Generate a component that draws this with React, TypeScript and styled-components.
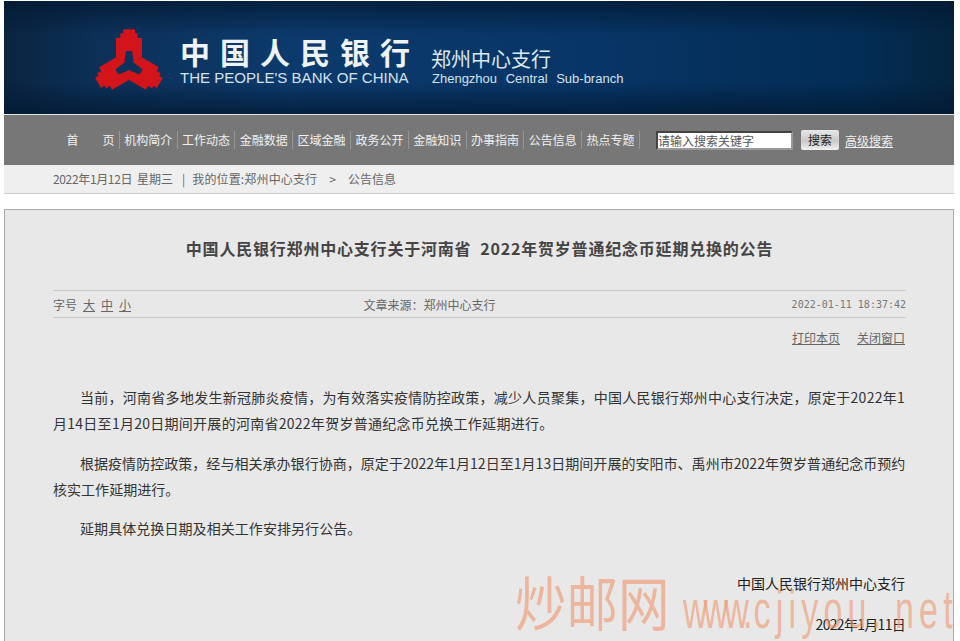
import React from "react";
import styled, { createGlobalStyle } from "styled-components";

const CJK = `"Noto Sans CJK SC", "Liberation Sans", sans-serif`;

const Global = createGlobalStyle`
  html, body { margin: 0; padding: 0; background: #fff; }
  body { font-family: ${CJK}; font-size: 12px; color: #666; }
`;

const Page = styled.div`
  position: relative;
  width: 960px;
  height: 641px;
  overflow: hidden;
  padding: 1px 6px 0 4px;
  box-sizing: border-box;
`;

const Banner = styled.header`
  display: flex;
  align-items: flex-start;
  height: 113px;
  padding: 27px 0 0 90px;
  box-sizing: border-box;
  background:
    linear-gradient(180deg, rgba(2, 24, 48, 0.75) 0, rgba(2, 24, 48, 0) 30%, rgba(2, 24, 48, 0) 72%, rgba(2, 24, 48, 0.75) 100%),
    linear-gradient(90deg, #0a2440 0, #0c3058 10%, #0c3a6c 30%, #073566 62%, #05305c 78%, #032d55 90%, #05243f 100%);
`;

const Logo = styled.svg`
  width: 72px;
  height: 64px;
  flex: none;
`;

const Brand = styled.div`
  display: flex;
  flex-direction: column;
  margin-left: 14px;
  width: 251px;
`;

const BrandCn = styled.div`
  font-size: 30px;
  line-height: 34px;
  margin-top: 6px;
  font-weight: 700;
  letter-spacing: 10px;
  color: #eef3f7;
  white-space: nowrap;
`;

const BrandEn = styled.div`
  font-family: "Liberation Sans", sans-serif;
  font-size: 15.05px;
  line-height: 18px;
  margin-top: 1px;
  color: #d3e2ee;
  white-space: nowrap;
`;

const Branch = styled.div`
  display: flex;
  flex-direction: column;
  margin-top: 19px;
`;

const BranchCn = styled.div`
  font-size: 20px;
  line-height: 24px;
  color: #dce8f0;
  white-space: nowrap;
`;

const BranchEn = styled.div`
  font-family: "Liberation Sans", sans-serif;
  font-size: 13px;
  line-height: 16px;
  word-spacing: 5px;
  margin: 0 0 0 1px;
  color: #d3e2ee;
  white-space: nowrap;
`;

const Nav = styled.nav`
  display: flex;
  align-items: center;
  height: 51px;
  border-top: 1px solid #e6e6e6;
  padding-left: 58px;
  box-sizing: border-box;
  background: #777;
`;

const NavItem = styled.a`
  width: 57.8px;
  height: 18px;
  line-height: 18px;
  box-sizing: border-box;
  border-right: 1px solid #969696;
  text-align: center;
  color: #f0f0f0;
  font-size: 12px;
  white-space: pre;
`;

const SearchInput = styled.div`
  width: 137px;
  height: 19px;
  margin-left: 16px;
  box-sizing: border-box;
  border: 2px solid #444;
  border-right-color: #999;
  border-bottom-color: #999;
  background: #fff;
  color: #555;
  font-size: 12px;
  line-height: 15px;
  white-space: nowrap;
  overflow: hidden;
`;

const SearchButton = styled.div`
  width: 38px;
  height: 20px;
  margin-left: 8px;
  border-radius: 2px;
  background: linear-gradient(180deg, #e8e8e8, #c8c8c8 55%, #f2f2f2);
  color: #222;
  font-size: 12px;
  line-height: 20px;
  text-align: center;
`;

const AdvancedLink = styled.a`
  margin-left: 6px;
  color: #f0f0f0;
  font-size: 12px;
  text-decoration: underline;
  white-space: nowrap;
`;

const Crumb = styled.div`
  display: flex;
  height: 29px;
  line-height: 28px;
  padding-left: 49px;
  box-sizing: border-box;
  background: #efefef;
  border-bottom: 1px solid #ccc;
  color: #666;
  font-size: 12px;
  white-space: pre;
`;

const CrumbDate = styled.span`
  letter-spacing: -0.35px;
  width: 84px;
`;

const CrumbPart = styled.span<{ $left: number; $spacing?: number }>`
  margin-left: ${(p) => p.$left}px;
  letter-spacing: ${(p) => p.$spacing ?? 0}px;
`;

const Panel = styled.main`
  margin-top: 15px;
  height: 470px;
  padding: 0 47px 0 48px;
  box-sizing: border-box;
  background: #e8e8e8;
  border: 1px solid #aaa;
  border-bottom: 0;
`;

const Title = styled.h1`
  margin: 0;
  height: 80px;
  padding-top: 26px;
  box-sizing: border-box;
  font-size: 16px;
  line-height: 24px;
  font-weight: 700;
  letter-spacing: 0.8px;
  color: #444;
  text-align: center;
  white-space: pre;
`;

const InfoBar = styled.div`
  display: grid;
  grid-template-columns: 1fr auto 1fr;
  align-items: center;
  height: 28px;
  box-sizing: border-box;
  border-top: 1px solid #c8c8c8;
  border-bottom: 1px solid #c8c8c8;
  font-size: 12px;
  color: #666;
`;

const SizeLinks = styled.div`
  display: flex;
  gap: 6px;
`;

const SizeLink = styled.a`
  text-decoration: underline;
`;

const Source = styled.div`
  margin-right: 100px;
`;

const Stamp = styled.div`
  justify-self: end;
  font-family: "DejaVu Sans Mono", monospace;
  font-size: 10px;
  color: #777;
`;

const Tools = styled.div`
  display: flex;
  justify-content: flex-end;
  gap: 17px;
  margin-top: 10px;
  padding-right: 1px;
  line-height: 20px;
  font-size: 12px;
  color: #666;
`;

const ToolLink = styled.a`
  text-decoration: underline;
`;

const Body = styled.article`
  margin-top: 36px;
  font-size: 14px;
  line-height: 26px;
  color: #333;
`;

const Para = styled.p<{ $spacing: number }>`
  margin: 0 0 13.5px;
  text-indent: 27px;
  letter-spacing: ${(p) => p.$spacing}px;
`;

const Sign = styled.div<{ $gap: number; $tight?: boolean }>`
  margin-top: ${(p) => p.$gap}px;
  padding-right: 1px;
  font-size: 14px;
  line-height: 20px;
  letter-spacing: ${(p) => (p.$tight ? -0.7 : 0)}px;
  color: #222;
  text-align: right;
`;

const Watermark = styled.div`
  position: absolute;
  left: 515px;
  top: 566px;
  display: flex;
  align-items: baseline;
  color: rgba(240, 150, 110, 0.62);
  white-space: nowrap;
  pointer-events: none;
`;

const WatermarkCn = styled.span`
  font-size: 51.5px;
  line-height: 70px;
  transform: scaleY(1.15);
`;

const WatermarkEn = styled.span`
  display: inline-block;
  margin-left: 13px;
  font-family: "Liberation Sans", sans-serif;
  font-size: 46px;
  line-height: 70px;
  letter-spacing: 7px;
  word-spacing: -8px;
  transform-origin: left bottom;
  transform: translateY(8px) scale(0.74, 1.15);
`;

const WatermarkWww = styled.span`
  letter-spacing: -5.4px;
  margin-right: 7px;
`;

const navItems = ["首　　页", "机构简介", "工作动态", "金融数据", "区域金融", "政务公开", "金融知识", "办事指南", "公告信息", "热点专题"];

const lobe =
  "130,40 165,40 165,52 173,52 173,66 186,66 186,124 161,141 156,105 138,105 133,141 108,124 108,66 121,66 121,52 130,52";

export default function App() {
  return (
    <Page>
      <Global />
      <Banner>
        <Logo viewBox="42 36 216 192" aria-hidden="true">
          <g fill="#d3141b">
            <polygon points={lobe} />
            <polygon points={lobe} transform="rotate(120 147 147)" />
            <polygon points={lobe} transform="rotate(240 147 147)" />
          </g>
        </Logo>
        <Brand>
          <BrandCn>中国人民银行</BrandCn>
          <BrandEn>THE PEOPLE'S BANK OF CHINA</BrandEn>
        </Brand>
        <Branch>
          <BranchCn>郑州中心支行</BranchCn>
          <BranchEn>Zhengzhou Central Sub-branch</BranchEn>
        </Branch>
      </Banner>
      <Nav>
        {navItems.map((n) => (
          <NavItem key={n}>{n}</NavItem>
        ))}
        <SearchInput>请输入搜索关键字</SearchInput>
        <SearchButton>搜索</SearchButton>
        <AdvancedLink>高级搜索</AdvancedLink>
      </Nav>
      <Crumb>
        <CrumbDate>2022年1月12日</CrumbDate>
        <CrumbPart $left={0}>星期三</CrumbPart>
        <CrumbPart $left={9}>|</CrumbPart>
        <CrumbPart $left={7} $spacing={0.15}>我的位置:郑州中心支行</CrumbPart>
        <CrumbPart $left={12}>&gt;</CrumbPart>
        <CrumbPart $left={12}>公告信息</CrumbPart>
      </Crumb>
      <Panel>
        <Title>中国人民银行郑州中心支行关于河南省  2022年贺岁普通纪念币延期兑换的公告</Title>
        <InfoBar>
          <SizeLinks>
            <span>字号</span>
            <SizeLink>大</SizeLink>
            <SizeLink>中</SizeLink>
            <SizeLink>小</SizeLink>
          </SizeLinks>
          <Source>文章来源：郑州中心支行</Source>
          <Stamp>2022-01-11 18:37:42</Stamp>
        </InfoBar>
        <Tools>
          <ToolLink>打印本页</ToolLink>
          <ToolLink>关闭窗口</ToolLink>
        </Tools>
        <Body>
          <Para $spacing={0.27}>当前，河南省多地发生新冠肺炎疫情，为有效落实疫情防控政策，减少人员聚集，中国人民银行郑州中心支行决定，原定于2022年1月14日至1月20日期间开展的河南省2022年贺岁普通纪念币兑换工作延期进行。</Para>
          <Para $spacing={0.04}>根据疫情防控政策，经与相关承办银行协商，原定于2022年1月12日至1月13日期间开展的安阳市、禹州市2022年贺岁普通纪念币预约核实工作延期进行。</Para>
          <Para $spacing={0.07}>延期具体兑换日期及相关工作安排另行公告。</Para>
        </Body>
        <Sign $gap={31.5}>中国人民银行郑州中心支行</Sign>
        <Sign $gap={21} $tight>2022年1月11日</Sign>
      </Panel>
      <Watermark>
        <WatermarkCn>炒邮网</WatermarkCn>
        <WatermarkEn><WatermarkWww>www.</WatermarkWww>cjiyou. net</WatermarkEn>
      </Watermark>
    </Page>
  );
}
